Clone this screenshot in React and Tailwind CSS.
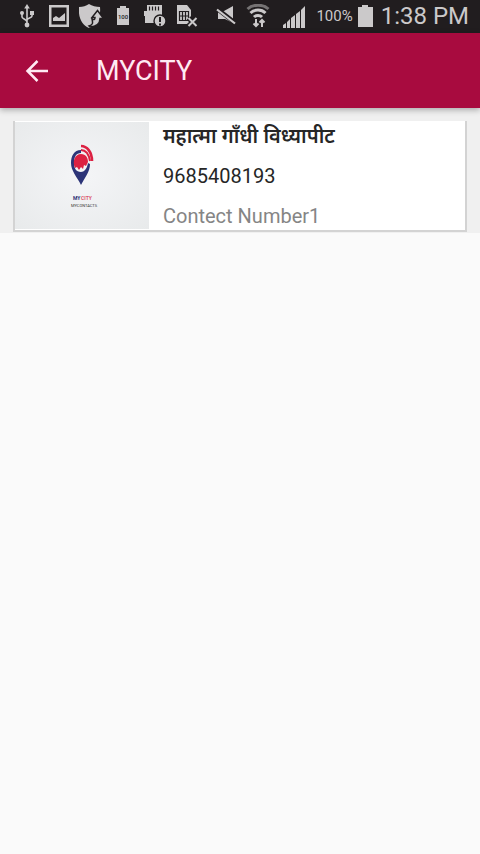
import React from 'react';

const contacts = [
  { id: 1, name: 'महात्मा गाँधी विध्यापीट', phone: '9685408193', label: 'Contect Number1' },
];

const UsbIcon = () => (
  <svg className="w-4 h-6 shrink-0" viewBox="0 0 16 24" fill="none" stroke="currentColor" strokeWidth="1.6">
    <path d="M8 4v17M3 9v4c0 2 5 2 5 5M13 9v3c0 2-5 2-5 4" />
    <path d="M8 0l2.800 4.500H5.200z" fill="currentColor" stroke="none" />
    <circle cx="8" cy="21" r="2.400" fill="currentColor" stroke="none" />
    <circle cx="3" cy="9" r="2" fill="currentColor" stroke="none" />
    <path d="M11 7h4v4h-4z" fill="currentColor" stroke="none" />
  </svg>
);

const ImageIcon = () => (
  <svg className="w-5 h-6 shrink-0" viewBox="0 0 20 24">
    <path fillRule="evenodd" fill="currentColor" d="M0 1h20v22H0zM2.500 3.500v17h15v-17z" />
    <path fill="currentColor" d="M4 17v-3l3-2 3 2 6-5v8z" />
  </svg>
);

const ShieldIcon = () => (
  <svg className="w-6 h-6 shrink-0" viewBox="0 0 24 24">
    <path fill="currentColor" d="M10 0c3 2 7 3 11 3 1 11-3 18-11 21C3 21-1 14 0 3c4 0 7-1 10-3z" />
    <path
      fill="currentColor"
      stroke="#211d1f"
      strokeWidth="1.500"
      d="M18.500 6.500l6 8h-3.500c0 5-3 8-10 8.500l-1-1c4-1 4-3 3-7 2 1 3 1 3-1.500h-3z"
    />
  </svg>
);

const BatteryFullIcon = () => (
  <svg className="w-3 h-5 shrink-0" viewBox="0 0 12 20">
    <path fill="currentColor" d="M3 0h6v2h3v17H0V2h3z" />
    <text x="6" y="13" textAnchor="middle" fill="#211d1f" className="font-['Roboto',sans-serif] text-[6px] font-medium">100</text>
  </svg>
);

const SdCardIcon = () => (
  <svg className="w-6 h-6 shrink-0" viewBox="0 0 24 24">
    <path fill="currentColor" d="M4 1h15v18H2v-7H1V7h3z" />
    <path stroke="#211d1f" strokeWidth="1.2" d="M6.500 2.500v4M9.500 2.500v4M12.500 2.500v4M15.500 2.500v4" />
    <circle cx="17" cy="17" r="6" fill="currentColor" stroke="#211d1f" strokeWidth="1.400" />
    <path stroke="#211d1f" strokeWidth="2" d="M17 13v5M17 19.500v2" />
  </svg>
);

const SimIcon = () => (
  <svg className="w-6 h-6 shrink-0" viewBox="0 0 24 24" fill="none">
    <path fill="currentColor" d="M2 1h10l4 5v14H2z" />
    <path stroke="#211d1f" strokeWidth="1.2" d="M4.500 7.500h9v9h-9zM7.500 7.500v9M10.500 7.500v9M4.500 12h9" />
    <path stroke="#211d1f" strokeWidth="5" d="M13.500 14l8 8M21.500 14l-8 8" />
    <path stroke="currentColor" strokeWidth="2" d="M13.500 14l8 8M21.500 14l-8 8" />
  </svg>
);

const MuteIcon = () => (
  <svg className="w-5 h-5 shrink-0" viewBox="0 0 20 20">
    <path fill="currentColor" d="M2 5h6l9-5v17l-8-4H2z" />
    <path stroke="#211d1f" strokeWidth="4.500" d="M0 2l20 15.500" />
    <path stroke="currentColor" strokeWidth="2.200" d="M1 3.500l18 14" />
  </svg>
);

const WifiIcon = () => (
  <svg className="w-6 h-6 shrink-0" viewBox="0 0 24 24" fill="none" stroke="currentColor">
    <path strokeWidth="3" opacity="0.5" d="M1.500 5C7 0 17 0 22.500 5" />
    <path strokeWidth="3" d="M4.500 9c4-4 11-4 15 0M8 13c2-2 6-2 8 0" />
    <path strokeWidth="2" d="M10 15v7M7.500 19.500L10 22l2.500-2.500M16 23v-7M13.500 18.500L16 16l2.500 2.500" />
  </svg>
);

const SignalIcon = () => (
  <svg className="w-6 h-6 shrink-0" viewBox="0 0 24 24" fill="currentColor">
    <path d="M1 21l3-2v5H1zM5 18l3-3v9H5zM9 14l4-3v13H9zM14 10l4-3v17h-4zM19 6l4-4v22h-4z" />
  </svg>
);

const BatteryIcon = () => (
  <svg className="w-4 h-6 shrink-0" viewBox="0 0 16 24" fill="currentColor">
    <path d="M5 1h6v2h5v20H1V3h4z" />
  </svg>
);

const StatusBar = () => (
  <div className="h-[33px] pb-px bg-[#211d1f] text-[#cbc9ca] flex items-center justify-between pl-[19px] pr-[11px]">
    <div className="flex items-center gap-3.5">
      <UsbIcon />
      <ImageIcon />
      <div className="-ml-1 flex items-center gap-3.5">
        <ShieldIcon />
        <BatteryFullIcon />
      </div>
      <div className="flex items-center gap-2">
        <SdCardIcon />
        <SimIcon />
      </div>
    </div>
    <div className="flex items-center">
      <div className="flex items-center gap-2.5">
        <MuteIcon />
        <WifiIcon />
      </div>
      <div className="ml-3 flex items-center gap-2.5">
        <SignalIcon />
        <span className="text-[15px] leading-8">100%</span>
      </div>
      <div className="ml-1 flex items-center gap-2">
        <BatteryIcon />
        <span className="text-2xl leading-8">1:38 PM</span>
      </div>
    </div>
  </div>
);

const AppBar = () => (
  <header className="relative h-[75px] bg-[#a80b3f] text-[#ffeaf3] flex items-center pl-6 shadow-[0_2px_6px_rgba(0,0,0,0.3)]">
    <button type="button" aria-label="Back" className="w-[26px] h-[26px]">
      <svg className="w-full h-full" viewBox="0 0 26 26" fill="none" stroke="currentColor" strokeWidth="2.500">
        <path d="M24 13H4M13.500 3L3.500 13l10 10" />
      </svg>
    </button>
    <h1 className="ml-[46px] text-[27px] leading-8">MYCITY</h1>
  </header>
);

const CityLogo = () => (
  <svg className="w-8 h-[72px]" viewBox="0 0 32 72">
    <path fill="#2c3478" d="M15 10C8 10 5 16 5 23c0 8 6 14 10 22 4-8 9-13 9-21l-2-1c-1 6-4 9-7 9-5 0-7-4-7-9 0-6 2-10 7-10z" />
    <path fill="#dc2142" d="M15 14c5 0 7 4 7 8l-2 4-2-1-1 4-2-2-2 3-2-3-2 1c-3-7 0-14 6-14z" />
    <path fill="none" stroke="#dc2142" strokeWidth="2" d="M15 10c5 0 8 5 9 11" />
    <path fill="none" stroke="#dc2142" strokeWidth="2.600" d="M15 6c6 0 11 6 11 15" />
    <g className="font-['Roboto',sans-serif] font-bold">
      <text x="7" y="60" fill="#2c3478" className="text-[5px]">MY</text>
      <text x="15" y="60" fill="#dc5a70" className="text-[5px]">CITY</text>
    </g>
    <text x="5" y="67" fill="#333333" className="font-['Roboto',sans-serif] text-[4px]">MYCONTACTS</text>
  </svg>
);

const ContactCard = ({ contact }) => (
  <article className="flex bg-white border-x-2 border-b-2 border-[#d3d3d3]">
    <div className="w-[134px] my-px shrink-0 bg-radial from-[#f4f5f7] to-[#e8eaeb] flex items-center justify-center">
      <CityLogo />
    </div>
    <div className="h-[109px] pt-px pl-3.5 flex flex-col justify-between text-xl leading-7 text-[#262626]">
      <h2 className="font-['Noto_Sans','Noto_Sans_Devanagari',sans-serif] text-xl leading-7 font-semibold">{contact.name}</h2>
      <p>{contact.phone}</p>
      <p className="text-[#858585]">{contact.label}</p>
    </div>
  </article>
);

const App = () => {
  return (
    <div className="min-h-screen bg-[#fafafa] font-['Roboto',sans-serif]">
      <StatusBar />
      <AppBar />
      <main className="bg-[#f0f0f0] px-[13px] pt-[13px] pb-px">
        {contacts.map((contact) => (
          <ContactCard key={contact.id} contact={contact} />
        ))}
      </main>
    </div>
  );
};

export default App;
